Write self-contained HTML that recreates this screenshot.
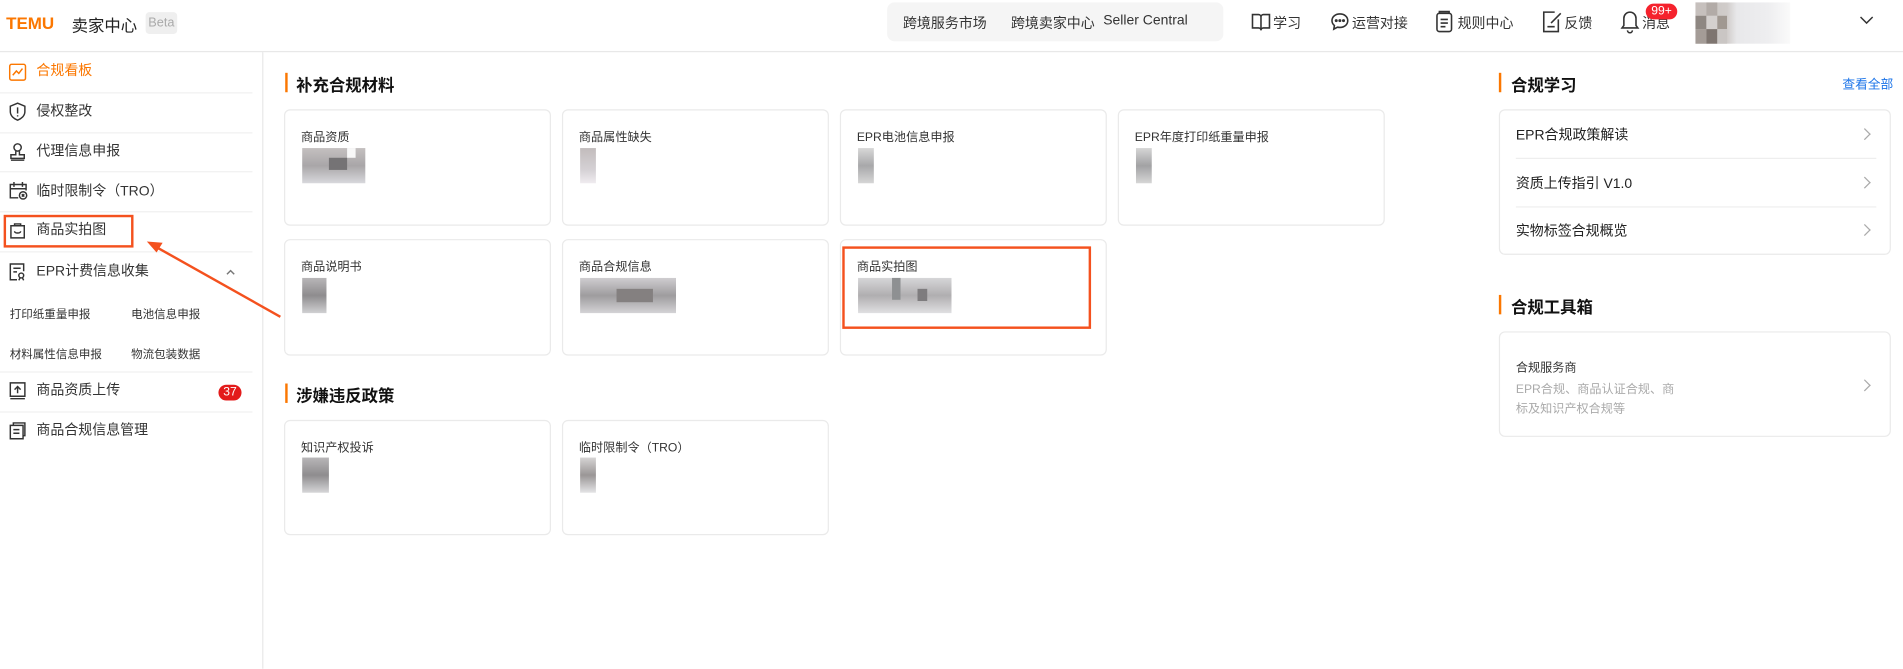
<!DOCTYPE html>
<html><head><meta charset="utf-8">
<style>
html,body{margin:0;padding:0;width:1903px;height:668px;overflow:hidden;background:#fff;}
*{box-sizing:border-box;}
#w{position:absolute;left:0;top:0;width:1568px;height:551px;transform:scale(1.21365);transform-origin:0 0;font-family:"Liberation Sans","Noto Sans CJK SC",sans-serif;color:#333;}
.a{position:absolute;white-space:nowrap;}
.hdr{position:absolute;left:0;top:0;width:1568px;height:43px;border-bottom:1px solid #e8e8e8;}
.pill{position:absolute;left:731px;top:2px;width:277px;height:32px;background:#f5f5f5;border-radius:6px;}
.sb{position:absolute;left:0;top:43px;width:217px;height:508px;border-right:1px solid #e8e8e8;}
.si{position:absolute;left:30px;font-size:11.5px;color:#333;line-height:14px;}
.sl{position:absolute;left:0;width:208px;height:1px;background:#f0f0f0;}
.ic{position:absolute;left:7px;}
.card{position:absolute;border:1px solid #eaeaea;border-radius:5px;background:#fff;}
.ct{position:absolute;left:13px;top:13px;font-size:10px;color:#333;}
.bar{position:absolute;width:2px;height:16px;background:#fb7701;}
.st{position:absolute;font-size:13.5px;font-weight:bold;color:#111;}
.px{position:absolute;width:7px;height:8px;}
.ri{position:absolute;left:13px;font-size:11.5px;color:#222;}
.chev{position:absolute;width:7px;height:7px;border-right:1px solid #aaa;border-top:1px solid #aaa;transform:rotate(45deg);}
.hn{font-size:11.5px;}
</style></head><body><div id="w">
<div class="hdr"></div>
<div class="a" style="left:5px;top:11px;font-size:14px;font-weight:900;color:#fb7701;">TEMU</div>
<div class="a" style="left:59px;top:10px;font-size:13.5px;color:#222;">卖家中心</div>
<div class="a" style="left:120px;top:10px;width:26px;height:18px;background:#efefef;border-radius:3px;font-size:10.5px;color:#aaa;text-align:center;line-height:18px;">Beta</div>
<div class="pill"></div>
<div class="a hn" style="left:744px;top:11px;">跨境服务市场</div>
<div class="a hn" style="left:833px;top:11px;">跨境卖家中心</div>
<div class="a hn" style="left:909px;top:11px;">Seller Central</div>
<svg class="a" style="left:1030px;top:9px" width="18" height="18" viewBox="0 0 18 18" fill="none" stroke="#333" stroke-width="1.3"><path d="M2 3h5a2 2 0 0 1 2 2v11a2 2 0 0 0-2-2H2z M16 3h-5a2 2 0 0 0-2 2v11a2 2 0 0 1 2-2h5z"/></svg>
<div class="a hn" style="left:1049px;top:11px;">学习</div>
<svg class="a" style="left:1095px;top:9px" width="18" height="18" viewBox="0 0 18 18" fill="none" stroke="#333" stroke-width="1.3"><path d="M9 2.5c-3.8 0-6.5 2.4-6.5 5.5 0 1.6.7 3 2 4l-.5 3 3-1.6c.6.1 1.3.2 2 .2 3.8 0 6.5-2.4 6.5-5.6S12.8 2.5 9 2.5z"/><circle cx="6" cy="8" r=".6" fill="#333"/><circle cx="9" cy="8" r=".6" fill="#333"/><circle cx="12" cy="8" r=".6" fill="#333"/></svg>
<div class="a hn" style="left:1114px;top:11px;">运营对接</div>
<svg class="a" style="left:1182px;top:8px" width="16" height="20" viewBox="0 0 16 20" fill="none" stroke="#333" stroke-width="1.3"><rect x="2" y="3" width="12" height="15" rx="2"/><path d="M4 3V1.5h8V3M5 8h6M5 11h6M5 14h4"/></svg>
<div class="a hn" style="left:1201px;top:11px;">规则中心</div>
<svg class="a" style="left:1270px;top:8px" width="18" height="20" viewBox="0 0 18 20" fill="none" stroke="#333" stroke-width="1.3"><path d="M11 2H2v16h12V8"/><path d="M8 11l8-8M5 14h6"/></svg>
<div class="a hn" style="left:1289px;top:11px;">反馈</div>
<svg class="a" style="left:1334px;top:8px" width="18" height="20" viewBox="0 0 18 20" fill="none" stroke="#333" stroke-width="1.3"><path d="M9 2a5 5 0 0 0-5 5v6l-1.5 2h13L14 13V7a5 5 0 0 0-5-5zM7 17a2 2 0 0 0 4 0"/></svg>
<div class="a hn" style="left:1353px;top:11px;">消息</div>
<div class="a" style="left:1356px;top:3px;width:26px;height:13px;background:#f5222d;border-radius:7px;color:#fff;font-size:10px;text-align:center;line-height:13px;">99+</div>
<div class="a" style="left:1397px;top:2px;width:78px;height:34px;background:linear-gradient(90deg,#c8c3c0 0,#d0ccca 26px,#e8e8ea 34px,#eeeef0 60px,#fafafa 78px);"></div>
<div class="px" style="left:1397px;top:2px;width:9px;height:11px;background:#c6c0bd"></div>
<div class="px" style="left:1406px;top:2px;width:9px;height:11px;background:#b2aba7"></div>
<div class="px" style="left:1397px;top:13px;width:9px;height:11px;background:#8e8782"></div>
<div class="px" style="left:1406px;top:13px;width:9px;height:11px;background:#d4d0ce"></div>
<div class="px" style="left:1415px;top:13px;width:8px;height:11px;background:#a09891"></div>
<div class="px" style="left:1397px;top:24px;width:9px;height:12px;background:#a49c97"></div>
<div class="px" style="left:1406px;top:24px;width:9px;height:12px;background:#7e7570"></div>
<div class="px" style="left:1415px;top:24px;width:8px;height:12px;background:#cac6c4"></div>
<svg class="a" style="left:1532px;top:13px" width="12" height="8" viewBox="0 0 12 8" fill="none" stroke="#333" stroke-width="1.2"><path d="M1 1l5 5 5-5"/></svg>

<div class="sb"></div>
<svg class="ic" style="top:52px" width="15" height="15" viewBox="0 0 15 15" fill="none" stroke="#fb7701" stroke-width="1.2"><rect x="1" y="1" width="13" height="13" rx="1.5"/><path d="M3.5 10l3-3.5 2 2 3-4"/></svg>
<div class="si" style="top:52px;color:#fb7701;">合规看板</div>
<div class="sl" style="top:76px"></div>
<svg class="ic" style="top:84px" width="15" height="16" viewBox="0 0 15 16" fill="none" stroke="#333" stroke-width="1.2"><path d="M7.5 1l6 2.5V8c0 3.5-3 6-6 7-3-1-6-3.5-6-7V3.5z"/><path d="M7.5 4.5v5M7.5 11v1"/></svg>
<div class="si" style="top:85px">侵权整改</div>
<div class="sl" style="top:109px"></div>
<svg class="ic" style="top:117px" width="15" height="16" viewBox="0 0 15 16" fill="none" stroke="#333" stroke-width="1.2"><circle cx="7.5" cy="4.5" r="3"/><path d="M6 7.5v3H2v3h11v-3H9v-3M2 15h11"/></svg>
<div class="si" style="top:118px">代理信息申报</div>
<div class="sl" style="top:141px"></div>
<svg class="ic" style="top:149px" width="16" height="16" viewBox="0 0 16 16" fill="none" stroke="#333" stroke-width="1.2"><path d="M8 14H1.5V3h13v5M1.5 6.5h13M4.5 1v4M11.5 1v4"/><circle cx="12" cy="12" r="3"/><path d="M11 11l2 2M13 11l-2 2"/></svg>
<div class="si" style="top:151px">临时限制令（TRO）</div>
<div class="sl" style="top:174px"></div>
<svg class="ic" style="top:182px" width="15" height="16" viewBox="0 0 15 16" fill="none" stroke="#333" stroke-width="1.2"><path d="M2 4h11v10H2z M5 4V2.5h5V4M5 8.5c0 2 5 2 5 0"/></svg>
<div class="si" style="top:183px">商品实拍图</div>
<div class="a" style="left:3px;top:177px;width:107px;height:27px;border:2px solid #f4511e;"></div>
<div class="sl" style="top:207px"></div>
<svg class="ic" style="top:216px" width="15" height="16" viewBox="0 0 15 16" fill="none" stroke="#333" stroke-width="1.2"><path d="M7 14.5H1.5v-13h11v6M4 5h6M4 8h3"/><circle cx="10.5" cy="11" r="2"/><path d="M9.5 13l-1 2M11.5 13l1 2"/></svg>
<div class="si" style="top:217px">EPR计费信息收集</div>
<svg class="a" style="left:186px;top:221px" width="8" height="6" viewBox="0 0 8 6" fill="none" stroke="#777" stroke-width="1.2"><path d="M1 5l3-3 3 3"/></svg>
<div class="a" style="left:8px;top:251px;font-size:9.5px;">打印纸重量申报</div>
<div class="a" style="left:108px;top:251px;font-size:9.5px;">电池信息申报</div>
<div class="a" style="left:8px;top:284px;font-size:9.5px;">材料属性信息申报</div>
<div class="a" style="left:108px;top:284px;font-size:9.5px;">物流包装数据</div>
<div class="sl" style="top:306px"></div>
<svg class="ic" style="top:314px" width="15" height="16" viewBox="0 0 15 16" fill="none" stroke="#333" stroke-width="1.2"><path d="M1.5 1.5h12v11h-12z M1.5 14.5h12M7.5 10V4.5M5 7l2.5-2.5L10 7"/></svg>
<div class="si" style="top:315px">商品资质上传</div>
<div class="a" style="left:180px;top:317px;width:19px;height:13px;border-radius:7px;background:#e31b1b;color:#fff;font-size:10px;text-align:center;line-height:13px;">37</div>
<div class="sl" style="top:339px"></div>
<svg class="ic" style="top:347px" width="15" height="16" viewBox="0 0 15 16" fill="none" stroke="#333" stroke-width="1.2"><path d="M4 3V1.5h9.5V12H12 M1.5 3.5H12v11H1.5z M4 7h5M4 10h5"/></svg>
<div class="si" style="top:348px">商品合规信息管理</div>
<svg class="a" style="left:110px;top:190px" width="130" height="80" viewBox="110 190 130 80"><path d="M231 261L126 202" stroke="#f4511e" stroke-width="2" fill="none"/><path d="M121 199l13 1-5 8z" fill="#f4511e"/></svg>

<div class="bar" style="left:235px;top:60px"></div><div class="st" style="left:244px;top:59px">补充合规材料</div>
<div class="card" style="left:234px;top:90px;width:220px;height:96px"><div class="ct">商品资质</div></div>
<div class="card" style="left:463px;top:90px;width:220px;height:96px"><div class="ct">商品属性缺失</div></div>
<div class="card" style="left:692px;top:90px;width:220px;height:96px"><div class="ct">EPR电池信息申报</div></div>
<div class="card" style="left:921px;top:90px;width:220px;height:96px"><div class="ct">EPR年度打印纸重量申报</div></div>
<div class="card" style="left:234px;top:197px;width:220px;height:96px"><div class="ct">商品说明书</div></div>
<div class="card" style="left:463px;top:197px;width:220px;height:96px"><div class="ct">商品合规信息</div></div>
<div class="card" style="left:692px;top:197px;width:220px;height:96px"><div class="ct">商品实拍图</div></div>
<div class="a" style="left:694px;top:203px;width:205px;height:68px;border:2px solid #f4511e;"></div>
<div class="bar" style="left:235px;top:316px"></div><div class="st" style="left:244px;top:315px">涉嫌违反政策</div>
<div class="card" style="left:234px;top:346px;width:220px;height:95px"><div class="ct">知识产权投诉</div></div>
<div class="card" style="left:463px;top:346px;width:220px;height:95px"><div class="ct">临时限制令（TRO）</div></div>

<div class="px" style="left:249px;top:122px;width:52px;height:29px;background:linear-gradient(180deg,#c4c0c0,#a9a6a8 50%,#d8d8dc)"></div>
<div class="px" style="left:271px;top:130px;width:15px;height:10px;background:#757375"></div>
<div class="px" style="left:286px;top:122px;width:7px;height:8px;background:#f8f8f8"></div>
<div class="px" style="left:478px;top:122px;width:13px;height:29px;background:linear-gradient(180deg,#c2bcbc,#d4d0d4 60%,#efecef)"></div>
<div class="px" style="left:707px;top:122px;width:13px;height:29px;background:linear-gradient(180deg,#d8d8d8,#a8a8aa 50%,#d6d6d6)"></div>
<div class="px" style="left:936px;top:122px;width:13px;height:29px;background:linear-gradient(180deg,#d6d6d6,#a2a2a4 50%,#d6d6d6)"></div>
<div class="px" style="left:249px;top:229px;width:20px;height:29px;background:linear-gradient(180deg,#b8b6b8,#8e8c8e 50%,#d0d0d2)"></div>
<div class="px" style="left:478px;top:229px;width:79px;height:29px;background:linear-gradient(180deg,#cfcdd0,#9e9c9e 50%,#d4d3d6)"></div>
<div class="px" style="left:508px;top:238px;width:30px;height:11px;background:#848080"></div>
<div class="px" style="left:707px;top:229px;width:77px;height:29px;background:linear-gradient(180deg,#d6d6d8,#b0aeb0 50%,#e0e0e2)"></div>
<div class="px" style="left:735px;top:229px;width:7px;height:18px;background:#8e9092"></div>
<div class="px" style="left:756px;top:238px;width:8px;height:10px;background:#7e7c7e"></div>
<div class="px" style="left:249px;top:377px;width:22px;height:29px;background:linear-gradient(180deg,#b8b6b8,#8e8c8e 50%,#d6d6d8)"></div>
<div class="px" style="left:478px;top:377px;width:13px;height:29px;background:linear-gradient(180deg,#d6d4d4,#9a9696 50%,#e4e4e6)"></div>

<div class="bar" style="left:1235px;top:60px"></div><div class="st" style="left:1245px;top:59px">合规学习</div>
<div class="a" style="left:1518px;top:62px;font-size:10.5px;color:#1a73e8;">查看全部</div>
<div class="card" style="left:1235px;top:90px;width:323px;height:120px">
<div class="ri" style="top:12px">EPR合规政策解读</div><div class="chev" style="left:297px;top:16px"></div>
<div class="a" style="left:13px;top:39px;width:297px;height:1px;background:#eee"></div>
<div class="ri" style="top:52px">资质上传指引 V1.0</div><div class="chev" style="left:297px;top:56px"></div>
<div class="a" style="left:13px;top:79px;width:297px;height:1px;background:#eee"></div>
<div class="ri" style="top:91px">实物标签合规概览</div><div class="chev" style="left:297px;top:95px"></div>
</div>
<div class="bar" style="left:1235px;top:243px"></div><div class="st" style="left:1245px;top:242px">合规工具箱</div>
<div class="card" style="left:1235px;top:273px;width:323px;height:87px">
<div class="a" style="left:13px;top:20px;font-size:10px;color:#333;">合规服务商</div>
<div class="a" style="left:13px;top:40px;font-size:10px;color:#aaa;line-height:16px;white-space:normal;width:170px;">EPR合规、商品认证合规、商<br>标及知识产权合规等</div>
<div class="chev" style="left:297px;top:40px"></div>
</div>
</div></body></html>
